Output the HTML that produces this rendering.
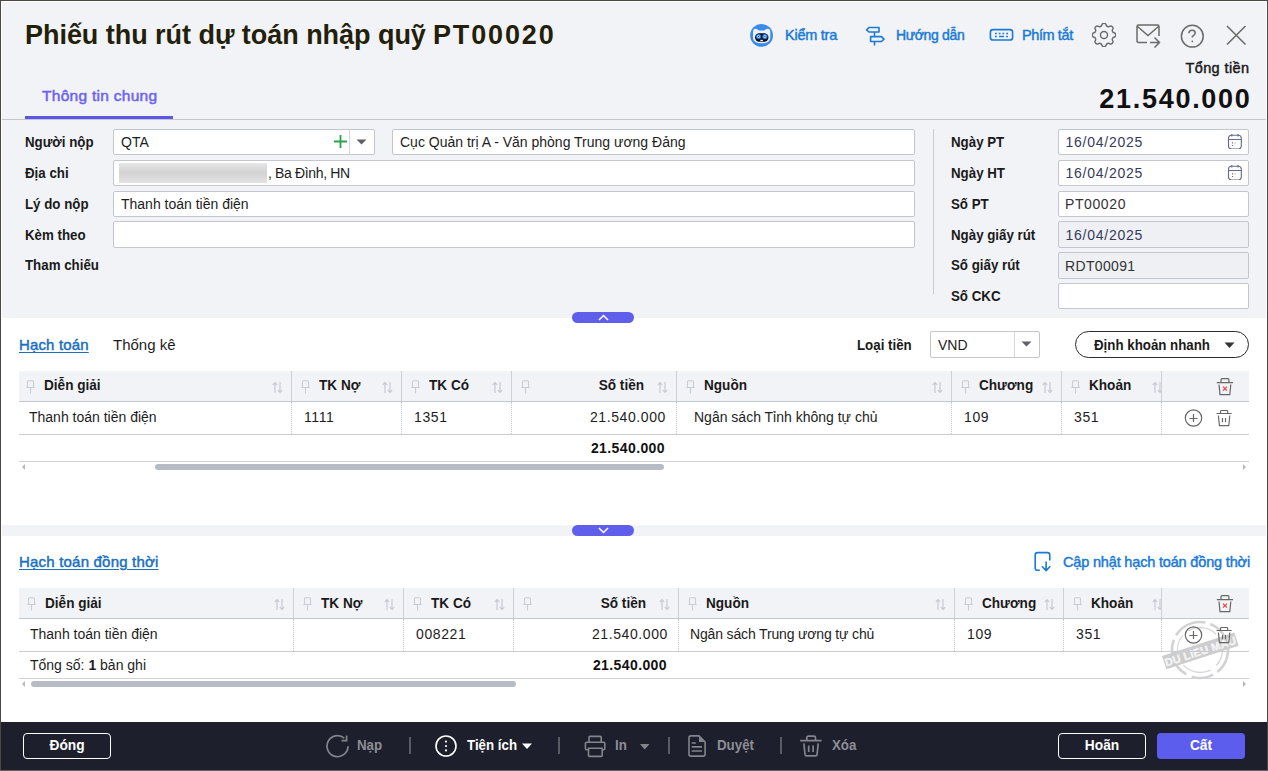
<!DOCTYPE html>
<html><head><meta charset="utf-8">
<style>
*{box-sizing:border-box;margin:0;padding:0}
html,body{width:1268px;height:771px;overflow:hidden;background:#fff}
body{position:relative;font-family:"Liberation Sans",sans-serif;color:#1d1d1d}
.a{position:absolute}
.t{position:absolute;white-space:nowrap}
</style></head><body>
<div class="a" style="left:0px;top:0px;width:1268px;height:771px;background:#fff"></div>
<div class="a" style="left:2px;top:2px;width:1264px;height:316px;background:#f2f3f7"></div>
<div class="a" style="left:2px;top:525px;width:1264px;height:11px;background:#f2f3f7"></div>
<div class="a" style="left:0px;top:0px;width:1268px;height:1px;background:#4b4745"></div>
<div class="a" style="left:0px;top:0px;width:1px;height:771px;background:#4b4745"></div>
<div class="a" style="left:1267px;top:0px;width:1px;height:771px;background:#4b4745"></div>
<div class="a" style="left:0px;top:770px;width:1268px;height:1px;background:#65605d"></div>
<div class="t" style="top:24.64px;font-size:27px;line-height:20px;color:#231f0a;font-weight:bold;letter-spacing:-0.04px;left:25px;">Phiếu thu rút dự toán nhập quỹ</div>
<div class="t" style="top:24.64px;font-size:27px;line-height:20px;color:#231f0a;font-weight:bold;letter-spacing:1.85px;left:433px;">PT00020</div>
<svg class="a" style="left:748px;top:22px" width="28" height="27" viewBox="0 0 28 27"><circle cx="13.55" cy="13.4" r="11.4" fill="#3b8beb"/>
<path d="M5 10.2Q5 6.8 7.5 6.8Q9.5 6.8 10.8 8.4H16.3Q17.6 6.8 19.6 6.8Q22.3 6.8 22.3 10.2V15.5Q22.3 21.3 13.6 21.3Q5 21.3 5 15.5Z" fill="#eaf3fd"/>
<rect x="7" y="11.2" width="13.5" height="8.6" rx="4.2" fill="#0d0d12"/>
<circle cx="10.6" cy="14.6" r="2.6" fill="#1e7cf2"/><circle cx="16.9" cy="14.6" r="2.6" fill="#1e7cf2"/>
<circle cx="10.6" cy="14.6" r="1.4" fill="#cfe3fb"/><circle cx="16.9" cy="14.6" r="1.4" fill="#cfe3fb"/>
<circle cx="10.6" cy="14.6" r="0.7" fill="#333"/><circle cx="16.9" cy="14.6" r="0.7" fill="#333"/>
<rect x="12.4" y="17.8" width="2.4" height="1.3" fill="#fff"/></svg>
<div class="t" style="top:24.98px;font-size:14.5px;line-height:20px;color:#1a7ad6;-webkit-text-stroke:0.45px #1a7ad6;letter-spacing:-0.25px;left:785px;">Kiểm tra</div>
<svg class="a" style="left:862px;top:24px" width="26" height="24" viewBox="0 0 26 24"><path d="M7 3.5H17V8H7L4.6 5.8Z M12.5 8V12.6 M8.6 12.6H19.5L22 15.1L19.5 17.5H8.6Z M12.5 17.5V21.5" fill="none" stroke="#1a7ad6" stroke-width="1.6" stroke-linejoin="round"/></svg>
<div class="t" style="top:25.15px;font-size:14px;line-height:20px;color:#1a7ad6;-webkit-text-stroke:0.45px #1a7ad6;letter-spacing:-0.35px;left:896px;">Hướng dẫn</div>
<svg class="a" style="left:986px;top:25px" width="31" height="19" viewBox="0 0 31 19"><rect x="4.4" y="4.6" width="22.2" height="10.4" rx="2.6" fill="none" stroke="#1a7ad6" stroke-width="1.6"/><path d="M9 8.5h1.8M12.7 8.5h1.8M16.4 8.5h1.8M20.2 8.5h1.8M9 11.5h1.8M13.1 11.5h4.9M20.2 11.5h1.8" stroke="#1a7ad6" stroke-width="1.5"/></svg>
<div class="t" style="top:24.98px;font-size:14.5px;line-height:20px;color:#1a7ad6;-webkit-text-stroke:0.45px #1a7ad6;letter-spacing:-0.4px;left:1022px;">Phím tắt</div>
<svg class="a" style="left:1092px;top:23px" width="24" height="24" viewBox="2.8 2.8 18.4 18.4"><path d="M10.325 4.317c.426 -1.756 2.924 -1.756 3.35 0a1.724 1.724 0 0 0 2.573 1.066c1.543 -.94 3.31 .826 2.37 2.37a1.724 1.724 0 0 0 1.065 2.572c1.756 .426 1.756 2.924 0 3.35a1.724 1.724 0 0 0 -1.066 2.573c.94 1.543 -.826 3.31 -2.37 2.37a1.724 1.724 0 0 0 -2.572 1.065c-.426 1.756 -2.924 1.756 -3.35 0a1.724 1.724 0 0 0 -2.573 -1.066c-1.543 .94 -3.31 -.826 -2.37 -2.37a1.724 1.724 0 0 0 -1.065 -2.572c-1.756 -.426 -1.756 -2.924 0 -3.35a1.724 1.724 0 0 0 1.066 -2.573c-.94 -1.543 .826 -3.31 2.37 -2.37c1 .608 2.296 .07 2.572 -1.065z M9.3 12a2.7 2.7 0 1 0 5.4 0a2.7 2.7 0 0 0 -5.4 0" fill="none" stroke="#6b6b6b" stroke-width="1.1"/></svg>
<svg class="a" style="left:1136px;top:24px" width="25" height="24" viewBox="0 0 25 24"><path d="M11 18.5H2.5Q1 18.5 1 17V2.5Q1 1 2.5 1H21.5Q23 1 23 2.5V12 M1.5 2.5L12 11.5L22.5 2.5 M14 18.5H23.5 M18.5 13.5L23.5 18.5L18.5 23.5" fill="none" stroke="#6b6b6b" stroke-width="1.5"/></svg>
<svg class="a" style="left:1180px;top:24px" width="25" height="25" viewBox="0 0 25 25"><circle cx="12.3" cy="12.2" r="10.9" fill="none" stroke="#6b6b6b" stroke-width="1.5"/><path d="M8.8 9.3Q9 6.2 12.2 6.2Q15.2 6.2 15.2 9Q15.2 11 12.3 12.5V13.5" fill="none" stroke="#6b6b6b" stroke-width="1.5"/><circle cx="12.3" cy="17.3" r="0.9" fill="#6b6b6b"/></svg>
<svg class="a" style="left:1226px;top:25px" width="21" height="21" viewBox="0 0 21 21"><path d="M1 1L19.5 19.5M19.5 1L1 19.5" stroke="#6b6b6b" stroke-width="1.6"/></svg>
<div class="t" style="top:57.98px;font-size:14.5px;line-height:20px;color:#1a1a1a;-webkit-text-stroke:0.45px #1a1a1a;letter-spacing:0.4px;left:649.5px;width:600px;text-align:right;margin-right:-0.4px;">Tổng tiền</div>
<div class="t" style="top:88.64px;font-size:27px;line-height:20px;color:#111;font-weight:bold;letter-spacing:1.7px;left:651.5px;width:600px;text-align:right;margin-right:-1.7px;">21.540.000</div>
<div class="t" style="top:85.63px;font-size:15.5px;line-height:20px;color:#6b63ee;-webkit-text-stroke:0.5px #6b63ee;letter-spacing:0.28px;left:42px;">Thông tin chung</div>
<div class="a" style="left:25px;top:116px;width:148px;height:3px;background:#5b55ea"></div>
<div class="a" style="left:2px;top:119px;width:1264px;height:1px;background:#c4c6cc"></div>
<div class="t" style="top:132.15px;font-size:14px;line-height:20px;color:#1a1a1a;font-weight:bold;transform:scaleX(0.95);transform-origin:left center;left:25px;">Người nộp</div>
<div class="t" style="top:163.15px;font-size:14px;line-height:20px;color:#1a1a1a;font-weight:bold;transform:scaleX(0.95);transform-origin:left center;left:25px;">Địa chi</div>
<div class="t" style="top:194.15px;font-size:14px;line-height:20px;color:#1a1a1a;font-weight:bold;transform:scaleX(0.95);transform-origin:left center;left:25px;">Lý do nộp</div>
<div class="t" style="top:225.15px;font-size:14px;line-height:20px;color:#1a1a1a;font-weight:bold;transform:scaleX(0.95);transform-origin:left center;left:25px;">Kèm theo</div>
<div class="t" style="top:255.15px;font-size:14px;line-height:20px;color:#1a1a1a;font-weight:bold;transform:scaleX(0.95);transform-origin:left center;left:25px;">Tham chiếu</div>
<div class="a" style="left:113px;top:129px;width:262px;height:26px;background:#fff;border:1px solid #c4c6cf;border-radius:2px"></div>
<div class="a" style="left:392px;top:129px;width:523px;height:26px;background:#fff;border:1px solid #c4c6cf;border-radius:2px"></div>
<div class="a" style="left:113px;top:160px;width:802px;height:26px;background:#fff;border:1px solid #c4c6cf;border-radius:2px"></div>
<div class="a" style="left:113px;top:191px;width:802px;height:26px;background:#fff;border:1px solid #c4c6cf;border-radius:2px"></div>
<div class="a" style="left:113px;top:221px;width:802px;height:27px;background:#fff;border:1px solid #c4c6cf;border-radius:2px"></div>
<div class="a" style="left:349px;top:130px;width:1px;height:24px;background:#d5d7dd"></div>
<svg class="a" style="left:333px;top:134px" width="15" height="15" viewBox="0 0 15 15"><path d="M7.5 1V14M1 7.5H14" stroke="#2aa44a" stroke-width="1.8"/></svg>
<svg class="a" style="left:356px;top:139px" width="11" height="6" viewBox="0 0 11 6"><path d="M0.5 0.5H10.5L5.5 5.5Z" fill="#5f6066"/></svg>
<div class="t" style="top:132.15px;font-size:14px;line-height:20px;color:#1d1d1d;left:121px;">QTA</div>
<div class="t" style="top:132.15px;font-size:14px;line-height:20px;color:#1d1d1d;left:400px;">Cục Quản trị A - Văn phòng Trung ương Đảng</div>
<div class="a" style="left:119px;top:163px;width:148px;height:20px;background:linear-gradient(180deg,#e6e6e6 0%,#d3d3d3 45%,#d6d6d6 60%,#e2e2e2 100%)"></div>
<div class="t" style="top:163.15px;font-size:14px;line-height:20px;color:#1d1d1d;letter-spacing:-0.35px;left:268px;">, Ba Đình, HN</div>
<div class="t" style="top:194.15px;font-size:14px;line-height:20px;color:#1d1d1d;left:121px;">Thanh toán tiền điện</div>
<div class="a" style="left:933px;top:129px;width:1px;height:165px;background:#c9cbd2"></div>
<div class="t" style="top:132.15px;font-size:14px;line-height:20px;color:#1a1a1a;font-weight:bold;transform:scaleX(0.95);transform-origin:left center;left:951px;">Ngày PT</div>
<div class="t" style="top:163.15px;font-size:14px;line-height:20px;color:#1a1a1a;font-weight:bold;transform:scaleX(0.95);transform-origin:left center;left:951px;">Ngày HT</div>
<div class="t" style="top:194.15px;font-size:14px;line-height:20px;color:#1a1a1a;font-weight:bold;transform:scaleX(0.95);transform-origin:left center;left:951px;">Số PT</div>
<div class="t" style="top:225.15px;font-size:14px;line-height:20px;color:#1a1a1a;font-weight:bold;transform:scaleX(0.95);transform-origin:left center;left:951px;">Ngày giấy rút</div>
<div class="t" style="top:255.15px;font-size:14px;line-height:20px;color:#1a1a1a;font-weight:bold;transform:scaleX(0.95);transform-origin:left center;left:951px;">Số giấy rút</div>
<div class="t" style="top:286.15px;font-size:14px;line-height:20px;color:#1a1a1a;font-weight:bold;transform:scaleX(0.95);transform-origin:left center;left:951px;">Số CKC</div>
<div class="a" style="left:1058px;top:129px;width:191px;height:26px;background:#fff;border:1px solid #c4c6cf;border-radius:2px"></div>
<div class="a" style="left:1058px;top:160px;width:191px;height:26px;background:#fff;border:1px solid #c4c6cf;border-radius:2px"></div>
<div class="a" style="left:1058px;top:191px;width:191px;height:26px;background:#fff;border:1px solid #c4c6cf;border-radius:2px"></div>
<div class="a" style="left:1058px;top:221px;width:191px;height:27px;background:#eef0f3;border:1px solid #c4c6cf;border-radius:2px"></div>
<div class="a" style="left:1058px;top:252px;width:191px;height:27px;background:#eef0f3;border:1px solid #c4c6cf;border-radius:2px"></div>
<div class="a" style="left:1058px;top:283px;width:191px;height:26px;background:#fff;border:1px solid #c4c6cf;border-radius:2px"></div>
<div class="t" style="top:132.15px;font-size:14px;line-height:20px;color:#363b5c;letter-spacing:0.75px;left:1065.5px;">16/04/2025</div>
<div class="t" style="top:163.15px;font-size:14px;line-height:20px;color:#363b5c;letter-spacing:0.75px;left:1065.5px;">16/04/2025</div>
<div class="t" style="top:194.15px;font-size:14px;line-height:20px;color:#333;letter-spacing:0.6px;left:1065px;">PT00020</div>
<div class="t" style="top:225.15px;font-size:14px;line-height:20px;color:#363b5c;letter-spacing:0.75px;left:1065.5px;">16/04/2025</div>
<div class="t" style="top:256.15px;font-size:14px;line-height:20px;color:#333;letter-spacing:0.35px;left:1065px;">RDT00091</div>
<svg class="a" style="left:1227px;top:133px" width="16" height="16" viewBox="0 0 16 16"><rect x="1.5" y="2.2" width="12.8" height="13.8" rx="3" fill="none" stroke="#646a91" stroke-width="1.1"/><path d="M4.8 1V3.4M11 1V3.4M1.5 6.45H14.3" stroke="#646a91" stroke-width="1.1"/><path d="M5.5 9.3V10.5M5.5 12.1V13.1" stroke="#646a91" stroke-width="1.1"/><path d="M8.1 9.3V10.5" stroke="#a9acc4" stroke-width="1.1"/></svg>
<svg class="a" style="left:1227px;top:164px" width="16" height="16" viewBox="0 0 16 16"><rect x="1.5" y="2.2" width="12.8" height="13.8" rx="3" fill="none" stroke="#646a91" stroke-width="1.1"/><path d="M4.8 1V3.4M11 1V3.4M1.5 6.45H14.3" stroke="#646a91" stroke-width="1.1"/><path d="M5.5 9.3V10.5M5.5 12.1V13.1" stroke="#646a91" stroke-width="1.1"/><path d="M8.1 9.3V10.5" stroke="#a9acc4" stroke-width="1.1"/></svg>
<div class="a" style="left:572px;top:312px;width:62px;height:11px;background:#5f5fec;border-radius:6px"></div>
<svg class="a" style="left:598px;top:314px" width="11" height="7" viewBox="0 0 11 7"><path d="M1 6L5.5 1.5L10 6" fill="none" stroke="#fff" stroke-width="1.5"/></svg>
<div class="a" style="left:572px;top:525px;width:62px;height:11px;background:#5f5fec;border-radius:6px"></div>
<svg class="a" style="left:598px;top:527px" width="11" height="7" viewBox="0 0 11 7"><path d="M1 1L5.5 5.5L10 1" fill="none" stroke="#fff" stroke-width="1.5"/></svg>
<div class="t" style="top:334.80px;font-size:15px;line-height:20px;color:#1a6fc0;-webkit-text-stroke:0.45px #1a6fc0;letter-spacing:0.15px;left:19px;text-decoration:underline;text-underline-offset:2px">Hạch toán</div>
<div class="t" style="top:334.80px;font-size:15px;line-height:20px;color:#1d1d1d;left:113px;">Thống kê</div>
<div class="t" style="top:335.15px;font-size:14px;line-height:20px;color:#1a1a1a;font-weight:bold;transform:scaleX(0.95);transform-origin:left center;left:857px;">Loại tiền</div>
<div class="a" style="left:930px;top:331px;width:110px;height:27px;background:#fff;border:1px solid #c4c6cf;border-radius:2px"></div>
<div class="a" style="left:1014px;top:332px;width:1px;height:25px;background:#d5d7dd"></div>
<svg class="a" style="left:1021px;top:341px" width="11" height="6" viewBox="0 0 11 6"><path d="M0.5 0.5H10.5L5.5 5.5Z" fill="#5f6066"/></svg>
<div class="t" style="top:335.15px;font-size:14px;line-height:20px;color:#1d1d1d;left:938px;">VND</div>
<div class="a" style="left:1075px;top:331px;width:174px;height:27px;background:#fff;border:1px solid #2b2b2b;border-radius:14px"></div>
<div class="t" style="top:335.15px;font-size:14px;line-height:20px;color:#1a1a1a;font-weight:bold;transform:scaleX(0.95);transform-origin:left center;left:1094px;">Định khoản nhanh</div>
<svg class="a" style="left:1224px;top:342px" width="11" height="7" viewBox="0 0 11 7"><path d="M0.5 0.5H10.5L5.5 6Z" fill="#333"/></svg>
<div class="t" style="top:551.80px;font-size:15px;line-height:20px;color:#1a6fc0;-webkit-text-stroke:0.45px #1a6fc0;letter-spacing:0.2px;left:19px;text-decoration:underline;text-underline-offset:2px">Hạch toán đồng thời</div>
<svg class="a" style="left:1028px;top:546px" width="30" height="30" viewBox="0 0 30 30"><path d="M11.3 24.3H9.5Q7.2 24.3 7.2 22V8.9Q7.2 6.6 9.5 6.6H19.5Q21.8 6.6 21.8 8.9V14 M18.1 16V24.8 M14.4 20.8L18.1 24.6L21.8 20.8" fill="none" stroke="#1a7ad6" stroke-width="1.6" stroke-linecap="round" stroke-linejoin="round"/></svg>
<svg class="a" style="left:1160px;top:615px" width="80" height="70" viewBox="0 0 80 70"><g transform="rotate(-18 40 35)">
<circle cx="40" cy="35" r="28" fill="none" stroke="#d2d2d2" stroke-width="2.6" stroke-dasharray="34 5 22 6 40 5"/>
<circle cx="40" cy="35" r="22.5" fill="none" stroke="#d8d8d8" stroke-width="1.3" stroke-dasharray="24 7 30 8"/>
<rect x="2" y="29" width="76" height="14" fill="#cdcdcd"/>
<text x="40" y="40.2" text-anchor="middle" font-family="Liberation Sans" font-weight="bold" font-size="11" letter-spacing="0.2" fill="#f4f4f4" stroke="#f4f4f4" stroke-width="0.4">DU LIEU MAU</text>
</g></svg>
<div class="t" style="top:551.98px;font-size:14.5px;line-height:20px;color:#1a7ad6;-webkit-text-stroke:0.45px #1a7ad6;letter-spacing:-0.17px;left:1063px;">Cập nhật hạch toán đồng thời</div>
<div class="a" style="left:19px;top:371px;width:1230px;height:30px;background:#f2f3f7"></div>
<div class="a" style="left:19px;top:401px;width:1230px;height:1px;background:#c4c7cf"></div>
<div class="a" style="left:19px;top:434px;width:1230px;height:1px;background:#c9ccd3"></div>
<div class="a" style="left:19px;top:461px;width:1230px;height:1px;background:#cfd1d7"></div>
<div class="a" style="left:291px;top:371px;width:1px;height:30px;background:#cdd0d6"></div>
<div class="a" style="left:291px;top:402px;width:1px;height:32px;border-left:1px dotted #c5c8cf"></div>
<div class="a" style="left:401px;top:371px;width:1px;height:30px;background:#cdd0d6"></div>
<div class="a" style="left:401px;top:402px;width:1px;height:32px;border-left:1px dotted #c5c8cf"></div>
<div class="a" style="left:511px;top:371px;width:1px;height:30px;background:#cdd0d6"></div>
<div class="a" style="left:511px;top:402px;width:1px;height:32px;border-left:1px dotted #c5c8cf"></div>
<div class="a" style="left:676px;top:371px;width:1px;height:30px;background:#cdd0d6"></div>
<div class="a" style="left:676px;top:402px;width:1px;height:32px;border-left:1px dotted #c5c8cf"></div>
<div class="a" style="left:951px;top:371px;width:1px;height:30px;background:#cdd0d6"></div>
<div class="a" style="left:951px;top:402px;width:1px;height:32px;border-left:1px dotted #c5c8cf"></div>
<div class="a" style="left:1061px;top:371px;width:1px;height:30px;background:#cdd0d6"></div>
<div class="a" style="left:1061px;top:402px;width:1px;height:32px;border-left:1px dotted #c5c8cf"></div>
<div class="a" style="left:1161px;top:371px;width:1px;height:30px;background:#cdd0d6"></div>
<div class="a" style="left:1161px;top:402px;width:1px;height:32px;border-left:1px dotted #c5c8cf"></div>
<svg class="a" style="left:26px;top:380px" width="9" height="14" viewBox="0 0 9 14"><path d="M1.5 7.5V1.8Q1.5 0.8 2.5 0.8H6.5Q7.5 0.8 7.5 1.8V7.5M0.3 7.5H8.7M4.5 7.5V13.5" stroke="#c9ccd2" stroke-width="1.1" fill="none"/></svg>
<div class="t" style="top:375.15px;font-size:14px;line-height:20px;color:#1a1a1a;font-weight:bold;transform:scaleX(0.97);transform-origin:left center;left:44px;">Diễn giải</div>
<svg class="a" style="left:272px;top:381px" width="11" height="13" viewBox="0 0 11 13"><path d="M3 12V1.8M0.8 3.9L3 1.5L5.2 3.9M8 1V11.2M5.8 9.1L8 11.5L10.2 9.1" stroke="#c6c9d0" stroke-width="1.15" fill="none"/></svg>
<svg class="a" style="left:301px;top:380px" width="9" height="14" viewBox="0 0 9 14"><path d="M1.5 7.5V1.8Q1.5 0.8 2.5 0.8H6.5Q7.5 0.8 7.5 1.8V7.5M0.3 7.5H8.7M4.5 7.5V13.5" stroke="#c9ccd2" stroke-width="1.1" fill="none"/></svg>
<div class="t" style="top:375.15px;font-size:14px;line-height:20px;color:#1a1a1a;font-weight:bold;transform:scaleX(0.97);transform-origin:left center;left:319px;">TK Nợ</div>
<svg class="a" style="left:382px;top:381px" width="11" height="13" viewBox="0 0 11 13"><path d="M3 12V1.8M0.8 3.9L3 1.5L5.2 3.9M8 1V11.2M5.8 9.1L8 11.5L10.2 9.1" stroke="#c6c9d0" stroke-width="1.15" fill="none"/></svg>
<svg class="a" style="left:411px;top:380px" width="9" height="14" viewBox="0 0 9 14"><path d="M1.5 7.5V1.8Q1.5 0.8 2.5 0.8H6.5Q7.5 0.8 7.5 1.8V7.5M0.3 7.5H8.7M4.5 7.5V13.5" stroke="#c9ccd2" stroke-width="1.1" fill="none"/></svg>
<div class="t" style="top:375.15px;font-size:14px;line-height:20px;color:#1a1a1a;font-weight:bold;transform:scaleX(0.97);transform-origin:left center;left:429px;">TK Có</div>
<svg class="a" style="left:492px;top:381px" width="11" height="13" viewBox="0 0 11 13"><path d="M3 12V1.8M0.8 3.9L3 1.5L5.2 3.9M8 1V11.2M5.8 9.1L8 11.5L10.2 9.1" stroke="#c6c9d0" stroke-width="1.15" fill="none"/></svg>
<svg class="a" style="left:521px;top:380px" width="9" height="14" viewBox="0 0 9 14"><path d="M1.5 7.5V1.8Q1.5 0.8 2.5 0.8H6.5Q7.5 0.8 7.5 1.8V7.5M0.3 7.5H8.7M4.5 7.5V13.5" stroke="#c9ccd2" stroke-width="1.1" fill="none"/></svg>
<div class="t" style="top:375.15px;font-size:14px;line-height:20px;color:#1a1a1a;font-weight:bold;transform:scaleX(0.97);transform-origin:right center;left:44px;width:600px;text-align:right;">Số tiền</div>
<svg class="a" style="left:657px;top:381px" width="11" height="13" viewBox="0 0 11 13"><path d="M3 12V1.8M0.8 3.9L3 1.5L5.2 3.9M8 1V11.2M5.8 9.1L8 11.5L10.2 9.1" stroke="#c6c9d0" stroke-width="1.15" fill="none"/></svg>
<svg class="a" style="left:686px;top:380px" width="9" height="14" viewBox="0 0 9 14"><path d="M1.5 7.5V1.8Q1.5 0.8 2.5 0.8H6.5Q7.5 0.8 7.5 1.8V7.5M0.3 7.5H8.7M4.5 7.5V13.5" stroke="#c9ccd2" stroke-width="1.1" fill="none"/></svg>
<div class="t" style="top:375.15px;font-size:14px;line-height:20px;color:#1a1a1a;font-weight:bold;transform:scaleX(0.97);transform-origin:left center;left:704px;">Nguồn</div>
<svg class="a" style="left:932px;top:381px" width="11" height="13" viewBox="0 0 11 13"><path d="M3 12V1.8M0.8 3.9L3 1.5L5.2 3.9M8 1V11.2M5.8 9.1L8 11.5L10.2 9.1" stroke="#c6c9d0" stroke-width="1.15" fill="none"/></svg>
<svg class="a" style="left:961px;top:380px" width="9" height="14" viewBox="0 0 9 14"><path d="M1.5 7.5V1.8Q1.5 0.8 2.5 0.8H6.5Q7.5 0.8 7.5 1.8V7.5M0.3 7.5H8.7M4.5 7.5V13.5" stroke="#c9ccd2" stroke-width="1.1" fill="none"/></svg>
<div class="t" style="top:375.15px;font-size:14px;line-height:20px;color:#1a1a1a;font-weight:bold;transform:scaleX(0.97);transform-origin:left center;left:979px;">Chương</div>
<svg class="a" style="left:1042px;top:381px" width="11" height="13" viewBox="0 0 11 13"><path d="M3 12V1.8M0.8 3.9L3 1.5L5.2 3.9M8 1V11.2M5.8 9.1L8 11.5L10.2 9.1" stroke="#c6c9d0" stroke-width="1.15" fill="none"/></svg>
<svg class="a" style="left:1071px;top:380px" width="9" height="14" viewBox="0 0 9 14"><path d="M1.5 7.5V1.8Q1.5 0.8 2.5 0.8H6.5Q7.5 0.8 7.5 1.8V7.5M0.3 7.5H8.7M4.5 7.5V13.5" stroke="#c9ccd2" stroke-width="1.1" fill="none"/></svg>
<div class="t" style="top:375.15px;font-size:14px;line-height:20px;color:#1a1a1a;font-weight:bold;transform:scaleX(0.97);transform-origin:left center;left:1089px;">Khoản</div>
<svg class="a" style="left:1152px;top:381px" width="11" height="13" viewBox="0 0 11 13"><path d="M3 12V1.8M0.8 3.9L3 1.5L5.2 3.9M8 1V11.2M5.8 9.1L8 11.5L10.2 9.1" stroke="#c6c9d0" stroke-width="1.15" fill="none"/></svg>
<div class="a" style="left:1162px;top:371px;width:87px;height:30px;background:#f2f3f7"></div>
<div class="a" style="left:1161px;top:371px;width:1px;height:30px;background:#cdd0d6"></div>
<svg class="a" style="left:1216px;top:378px" width="18" height="18" viewBox="0 0 18 18"><path d="M0.8 4.7H17 M5 4.7V1.6Q5 0.7 5.9 0.7H12Q12.9 0.7 12.9 1.6V4.7 M3 6.5L4 16.6H13.8L14.8 6.5" stroke="#676767" stroke-width="1.2" fill="none"/><path d="M7 8.7L11 12.7M11 8.7L7 12.7" stroke="#f23d3d" stroke-width="1.15"/></svg>
<div class="t" style="top:407.15px;font-size:14px;line-height:20px;color:#1d1d1d;left:29px;">Thanh toán tiền điện</div>
<div class="t" style="top:407.15px;font-size:14px;line-height:20px;color:#1d1d1d;letter-spacing:0.6px;left:304px;">1111</div>
<div class="t" style="top:407.15px;font-size:14px;line-height:20px;color:#1d1d1d;letter-spacing:0.6px;left:414px;">1351</div>
<div class="t" style="top:407.15px;font-size:14px;line-height:20px;color:#1d1d1d;letter-spacing:0.6px;left:66px;width:600px;text-align:right;margin-right:-0.6px;">21.540.000</div>
<div class="t" style="top:407.15px;font-size:14px;line-height:20px;color:#1d1d1d;left:694px;">Ngân sách Tỉnh không tự chủ</div>
<div class="t" style="top:407.15px;font-size:14px;line-height:20px;color:#1d1d1d;letter-spacing:0.6px;left:964px;">109</div>
<div class="t" style="top:407.15px;font-size:14px;line-height:20px;color:#1d1d1d;letter-spacing:0.6px;left:1074px;">351</div>
<svg class="a" style="left:1184px;top:409px" width="19" height="19" viewBox="0 0 19 19"><circle cx="9.5" cy="9" r="8.2" stroke="#676767" stroke-width="1.2" fill="none"/><path d="M5.5 9.5H13.5M9.5 5V13" stroke="#676767" stroke-width="1.2"/></svg>
<svg class="a" style="left:1216px;top:409px" width="18" height="18" viewBox="0 0 18 18"><path d="M0.5 4.5H15.7 M4.5 4.5V2.4Q4.5 1.5 5.4 1.5H10.8Q11.7 1.5 11.7 2.4V4.5 M2.4 6.5L3.4 16.6H12.8L13.8 6.5 M6.5 9V13.2 M9.5 9V13.2" stroke="#676767" stroke-width="1.15" fill="none"/></svg>
<div class="t" style="top:438.15px;font-size:14px;line-height:20px;color:#111;font-weight:bold;letter-spacing:0.4px;left:65px;width:600px;text-align:right;margin-right:-0.4px;">21.540.000</div>
<div class="a" style="left:155px;top:464px;width:509px;height:6px;background:#b7bbc3;border-radius:3px"></div>
<svg class="a" style="left:21px;top:464px" width="6" height="7" viewBox="0 0 6 7"><path d="M4 0L1 3L4 6Z" fill="#b5b9c1"/></svg>
<svg class="a" style="left:1242px;top:464px" width="6" height="7" viewBox="0 0 6 7"><path d="M1 0L4 3L1 6Z" fill="#b5b9c1"/></svg>
<div class="a" style="left:19px;top:588px;width:1230px;height:30px;background:#f2f3f7"></div>
<div class="a" style="left:19px;top:618px;width:1230px;height:1px;background:#c4c7cf"></div>
<div class="a" style="left:19px;top:651px;width:1230px;height:1px;background:#c9ccd3"></div>
<div class="a" style="left:19px;top:678px;width:1230px;height:1px;background:#cfd1d7"></div>
<div class="a" style="left:293px;top:588px;width:1px;height:30px;background:#cdd0d6"></div>
<div class="a" style="left:293px;top:619px;width:1px;height:32px;border-left:1px dotted #c5c8cf"></div>
<div class="a" style="left:403px;top:588px;width:1px;height:30px;background:#cdd0d6"></div>
<div class="a" style="left:403px;top:619px;width:1px;height:32px;border-left:1px dotted #c5c8cf"></div>
<div class="a" style="left:513px;top:588px;width:1px;height:30px;background:#cdd0d6"></div>
<div class="a" style="left:513px;top:619px;width:1px;height:32px;border-left:1px dotted #c5c8cf"></div>
<div class="a" style="left:678px;top:588px;width:1px;height:30px;background:#cdd0d6"></div>
<div class="a" style="left:678px;top:619px;width:1px;height:32px;border-left:1px dotted #c5c8cf"></div>
<div class="a" style="left:954px;top:588px;width:1px;height:30px;background:#cdd0d6"></div>
<div class="a" style="left:954px;top:619px;width:1px;height:32px;border-left:1px dotted #c5c8cf"></div>
<div class="a" style="left:1063px;top:588px;width:1px;height:30px;background:#cdd0d6"></div>
<div class="a" style="left:1063px;top:619px;width:1px;height:32px;border-left:1px dotted #c5c8cf"></div>
<div class="a" style="left:1161px;top:588px;width:1px;height:30px;background:#cdd0d6"></div>
<div class="a" style="left:1161px;top:619px;width:1px;height:32px;border-left:1px dotted #c5c8cf"></div>
<svg class="a" style="left:27px;top:597px" width="9" height="14" viewBox="0 0 9 14"><path d="M1.5 7.5V1.8Q1.5 0.8 2.5 0.8H6.5Q7.5 0.8 7.5 1.8V7.5M0.3 7.5H8.7M4.5 7.5V13.5" stroke="#c9ccd2" stroke-width="1.1" fill="none"/></svg>
<div class="t" style="top:593.15px;font-size:14px;line-height:20px;color:#1a1a1a;font-weight:bold;transform:scaleX(0.97);transform-origin:left center;left:45px;">Diễn giải</div>
<svg class="a" style="left:274px;top:598px" width="11" height="13" viewBox="0 0 11 13"><path d="M3 12V1.8M0.8 3.9L3 1.5L5.2 3.9M8 1V11.2M5.8 9.1L8 11.5L10.2 9.1" stroke="#c6c9d0" stroke-width="1.15" fill="none"/></svg>
<svg class="a" style="left:303px;top:597px" width="9" height="14" viewBox="0 0 9 14"><path d="M1.5 7.5V1.8Q1.5 0.8 2.5 0.8H6.5Q7.5 0.8 7.5 1.8V7.5M0.3 7.5H8.7M4.5 7.5V13.5" stroke="#c9ccd2" stroke-width="1.1" fill="none"/></svg>
<div class="t" style="top:593.15px;font-size:14px;line-height:20px;color:#1a1a1a;font-weight:bold;transform:scaleX(0.97);transform-origin:left center;left:321px;">TK Nợ</div>
<svg class="a" style="left:384px;top:598px" width="11" height="13" viewBox="0 0 11 13"><path d="M3 12V1.8M0.8 3.9L3 1.5L5.2 3.9M8 1V11.2M5.8 9.1L8 11.5L10.2 9.1" stroke="#c6c9d0" stroke-width="1.15" fill="none"/></svg>
<svg class="a" style="left:413px;top:597px" width="9" height="14" viewBox="0 0 9 14"><path d="M1.5 7.5V1.8Q1.5 0.8 2.5 0.8H6.5Q7.5 0.8 7.5 1.8V7.5M0.3 7.5H8.7M4.5 7.5V13.5" stroke="#c9ccd2" stroke-width="1.1" fill="none"/></svg>
<div class="t" style="top:593.15px;font-size:14px;line-height:20px;color:#1a1a1a;font-weight:bold;transform:scaleX(0.97);transform-origin:left center;left:431px;">TK Có</div>
<svg class="a" style="left:494px;top:598px" width="11" height="13" viewBox="0 0 11 13"><path d="M3 12V1.8M0.8 3.9L3 1.5L5.2 3.9M8 1V11.2M5.8 9.1L8 11.5L10.2 9.1" stroke="#c6c9d0" stroke-width="1.15" fill="none"/></svg>
<svg class="a" style="left:523px;top:597px" width="9" height="14" viewBox="0 0 9 14"><path d="M1.5 7.5V1.8Q1.5 0.8 2.5 0.8H6.5Q7.5 0.8 7.5 1.8V7.5M0.3 7.5H8.7M4.5 7.5V13.5" stroke="#c9ccd2" stroke-width="1.1" fill="none"/></svg>
<div class="t" style="top:593.15px;font-size:14px;line-height:20px;color:#1a1a1a;font-weight:bold;transform:scaleX(0.97);transform-origin:right center;left:46px;width:600px;text-align:right;">Số tiền</div>
<svg class="a" style="left:659px;top:598px" width="11" height="13" viewBox="0 0 11 13"><path d="M3 12V1.8M0.8 3.9L3 1.5L5.2 3.9M8 1V11.2M5.8 9.1L8 11.5L10.2 9.1" stroke="#c6c9d0" stroke-width="1.15" fill="none"/></svg>
<svg class="a" style="left:688px;top:597px" width="9" height="14" viewBox="0 0 9 14"><path d="M1.5 7.5V1.8Q1.5 0.8 2.5 0.8H6.5Q7.5 0.8 7.5 1.8V7.5M0.3 7.5H8.7M4.5 7.5V13.5" stroke="#c9ccd2" stroke-width="1.1" fill="none"/></svg>
<div class="t" style="top:593.15px;font-size:14px;line-height:20px;color:#1a1a1a;font-weight:bold;transform:scaleX(0.97);transform-origin:left center;left:706px;">Nguồn</div>
<svg class="a" style="left:935px;top:598px" width="11" height="13" viewBox="0 0 11 13"><path d="M3 12V1.8M0.8 3.9L3 1.5L5.2 3.9M8 1V11.2M5.8 9.1L8 11.5L10.2 9.1" stroke="#c6c9d0" stroke-width="1.15" fill="none"/></svg>
<svg class="a" style="left:964px;top:597px" width="9" height="14" viewBox="0 0 9 14"><path d="M1.5 7.5V1.8Q1.5 0.8 2.5 0.8H6.5Q7.5 0.8 7.5 1.8V7.5M0.3 7.5H8.7M4.5 7.5V13.5" stroke="#c9ccd2" stroke-width="1.1" fill="none"/></svg>
<div class="t" style="top:593.15px;font-size:14px;line-height:20px;color:#1a1a1a;font-weight:bold;transform:scaleX(0.97);transform-origin:left center;left:982px;">Chương</div>
<svg class="a" style="left:1044px;top:598px" width="11" height="13" viewBox="0 0 11 13"><path d="M3 12V1.8M0.8 3.9L3 1.5L5.2 3.9M8 1V11.2M5.8 9.1L8 11.5L10.2 9.1" stroke="#c6c9d0" stroke-width="1.15" fill="none"/></svg>
<svg class="a" style="left:1073px;top:597px" width="9" height="14" viewBox="0 0 9 14"><path d="M1.5 7.5V1.8Q1.5 0.8 2.5 0.8H6.5Q7.5 0.8 7.5 1.8V7.5M0.3 7.5H8.7M4.5 7.5V13.5" stroke="#c9ccd2" stroke-width="1.1" fill="none"/></svg>
<div class="t" style="top:593.15px;font-size:14px;line-height:20px;color:#1a1a1a;font-weight:bold;transform:scaleX(0.97);transform-origin:left center;left:1091px;">Khoản</div>
<svg class="a" style="left:1152px;top:598px" width="11" height="13" viewBox="0 0 11 13"><path d="M3 12V1.8M0.8 3.9L3 1.5L5.2 3.9M8 1V11.2M5.8 9.1L8 11.5L10.2 9.1" stroke="#c6c9d0" stroke-width="1.15" fill="none"/></svg>
<div class="a" style="left:1162px;top:588px;width:87px;height:30px;background:#f2f3f7"></div>
<div class="a" style="left:1161px;top:588px;width:1px;height:30px;background:#cdd0d6"></div>
<svg class="a" style="left:1216px;top:595px" width="18" height="18" viewBox="0 0 18 18"><path d="M0.8 4.7H17 M5 4.7V1.6Q5 0.7 5.9 0.7H12Q12.9 0.7 12.9 1.6V4.7 M3 6.5L4 16.6H13.8L14.8 6.5" stroke="#676767" stroke-width="1.2" fill="none"/><path d="M7 8.7L11 12.7M11 8.7L7 12.7" stroke="#f23d3d" stroke-width="1.15"/></svg>
<div class="t" style="top:624.15px;font-size:14px;line-height:20px;color:#1d1d1d;left:30px;">Thanh toán tiền điện</div>
<div class="t" style="top:624.15px;font-size:14px;line-height:20px;color:#1d1d1d;letter-spacing:0.6px;left:416px;">008221</div>
<div class="t" style="top:624.15px;font-size:14px;line-height:20px;color:#1d1d1d;letter-spacing:0.6px;left:68px;width:600px;text-align:right;margin-right:-0.6px;">21.540.000</div>
<div class="t" style="top:624.15px;font-size:14px;line-height:20px;color:#1d1d1d;letter-spacing:-0.15px;left:690px;">Ngân sách Trung ương tự chủ</div>
<div class="t" style="top:624.15px;font-size:14px;line-height:20px;color:#1d1d1d;letter-spacing:0.6px;left:967px;">109</div>
<div class="t" style="top:624.15px;font-size:14px;line-height:20px;color:#1d1d1d;letter-spacing:0.6px;left:1076px;">351</div>
<svg class="a" style="left:1184px;top:626px" width="19" height="19" viewBox="0 0 19 19"><circle cx="9.5" cy="9" r="8.2" stroke="#676767" stroke-width="1.2" fill="none"/><path d="M5.5 9.5H13.5M9.5 5V13" stroke="#676767" stroke-width="1.2"/></svg>
<svg class="a" style="left:1216px;top:626px" width="18" height="18" viewBox="0 0 18 18"><path d="M0.5 4.5H15.7 M4.5 4.5V2.4Q4.5 1.5 5.4 1.5H10.8Q11.7 1.5 11.7 2.4V4.5 M2.4 6.5L3.4 16.6H12.8L13.8 6.5 M6.5 9V13.2 M9.5 9V13.2" stroke="#676767" stroke-width="1.15" fill="none"/></svg>
<div class="t" style="top:655.15px;font-size:14px;line-height:20px;color:#1d1d1d;left:30px;">Tổng số: <b>1</b> bản ghi</div>
<div class="t" style="top:655.15px;font-size:14px;line-height:20px;color:#111;font-weight:bold;letter-spacing:0.4px;left:67px;width:600px;text-align:right;margin-right:-0.4px;">21.540.000</div>
<div class="a" style="left:31px;top:681px;width:485px;height:6px;background:#b7bbc3;border-radius:3px"></div>
<svg class="a" style="left:21px;top:681px" width="6" height="7" viewBox="0 0 6 7"><path d="M4 0L1 3L4 6Z" fill="#b5b9c1"/></svg>
<svg class="a" style="left:1242px;top:681px" width="6" height="7" viewBox="0 0 6 7"><path d="M1 0L4 3L1 6Z" fill="#b5b9c1"/></svg>
<div class="a" style="left:1px;top:722px;width:1266px;height:48px;background:#1e1f2d"></div>
<div class="a" style="left:23px;top:733px;width:88px;height:26px;border:1.3px solid #fff;border-radius:4px"></div>
<div class="t" style="top:735.15px;font-size:14px;line-height:20px;color:#fff;font-weight:bold;transform:scaleX(0.98);transform-origin:center center;left:-233px;width:600px;text-align:center;">Đóng</div>
<div class="a" style="left:1058px;top:733px;width:88px;height:26px;border:1.3px solid #fff;border-radius:4px"></div>
<div class="t" style="top:735.15px;font-size:14px;line-height:20px;color:#fff;font-weight:bold;transform:scaleX(0.98);transform-origin:center center;left:802px;width:600px;text-align:center;">Hoãn</div>
<div class="a" style="left:1157px;top:733px;width:88px;height:26px;background:#5d5ded;border-radius:4px"></div>
<div class="t" style="top:735.15px;font-size:14px;line-height:20px;color:#fff;font-weight:bold;transform:scaleX(0.98);transform-origin:center center;left:901px;width:600px;text-align:center;">Cất</div>
<svg class="a" style="left:323px;top:732px" width="29" height="28" viewBox="0 0 29 28"><path d="M25 14.2A10.5 10.5 0 1 1 21.25 6.16" fill="none" stroke="#83848c" stroke-width="1.7"/><path d="M23.6 3.6V8.7H18.5" fill="none" stroke="#83848c" stroke-width="1.7"/></svg>
<div class="t" style="top:735.15px;font-size:14px;line-height:20px;color:#8d8e95;font-weight:bold;transform:scaleX(0.95);transform-origin:left center;left:357px;">Nạp</div>
<div class="a" style="left:409px;top:737px;width:2px;height:17px;background:#5a5b63"></div>
<div class="a" style="left:558px;top:737px;width:2px;height:17px;background:#5a5b63"></div>
<div class="a" style="left:668px;top:737px;width:2px;height:17px;background:#5a5b63"></div>
<div class="a" style="left:780px;top:737px;width:2px;height:17px;background:#5a5b63"></div>
<svg class="a" style="left:435px;top:735px" width="22" height="22" viewBox="0 0 22 22"><circle cx="11" cy="11" r="10" fill="none" stroke="#fff" stroke-width="1.6"/><circle cx="11" cy="6.6" r="1.1" fill="#fff"/><circle cx="11" cy="11" r="1.1" fill="#fff"/><circle cx="11" cy="15.4" r="1.1" fill="#fff"/></svg>
<div class="t" style="top:735.15px;font-size:14px;line-height:20px;color:#fff;font-weight:bold;transform:scaleX(0.95);transform-origin:left center;left:467px;">Tiện ích</div>
<svg class="a" style="left:522px;top:743px" width="11" height="7" viewBox="0 0 11 7"><path d="M0 0.5H10L5 6Z" fill="#fff"/></svg>
<svg class="a" style="left:583px;top:734px" width="24" height="24" viewBox="0 0 24 24"><path d="M6 8.5V3.4Q6 2.4 7 2.4H17.2Q18.2 2.4 18.2 3.4V8.5 M5 15.8H3.6Q2.4 15.8 2.4 14.6V9.6Q2.4 8.2 3.8 8.2H20.4Q21.8 8.2 21.8 9.6V14.6Q21.8 15.8 20.6 15.8H19.2 M5.5 14.2H19.2V21.5Q19.2 22.4 18.2 22.4H6.5Q5.5 22.4 5.5 21.5Z" fill="none" stroke="#83848c" stroke-width="1.6" stroke-linejoin="round"/></svg>
<div class="t" style="top:735.15px;font-size:14px;line-height:20px;color:#8d8e95;font-weight:bold;transform:scaleX(0.95);transform-origin:left center;left:615px;">In</div>
<svg class="a" style="left:640px;top:744px" width="10" height="6" viewBox="0 0 10 6"><path d="M0 0H9.5L4.75 5.5Z" fill="#83848c"/></svg>
<svg class="a" style="left:687px;top:734px" width="20" height="24" viewBox="0 0 20 24"><path d="M12 1.9H3.8Q2 1.9 2 3.7V20.3Q2 22.1 3.8 22.1H16.3Q18.1 22.1 18.1 20.3V8Z M4.7 9H8.8 M4.7 12.9H15 M4.7 17H15" fill="none" stroke="#83848c" stroke-width="1.6" stroke-linejoin="round"/><path d="M12 1.9L18.1 8H12Z" fill="#83848c"/></svg>
<div class="t" style="top:735.15px;font-size:14px;line-height:20px;color:#8d8e95;font-weight:bold;transform:scaleX(0.95);transform-origin:left center;left:717px;">Duyệt</div>
<svg class="a" style="left:799px;top:734px" width="24" height="24" viewBox="0 0 24 24"><path d="M1.2 6.6H22.6 M7.8 6.6V3.8Q7.8 2.2 9.4 2.2H14.9Q16.5 2.2 16.5 3.8V6.6 M4.9 9.3L6 20.4Q6.2 21.9 7.7 21.9H16.4Q17.9 21.9 18.1 20.4L19.2 9.3 M9.7 11.4V18M14.1 11.4V18" fill="none" stroke="#83848c" stroke-width="1.7"/></svg>
<div class="t" style="top:735.15px;font-size:14px;line-height:20px;color:#8d8e95;font-weight:bold;transform:scaleX(0.95);transform-origin:left center;left:832px;">Xóa</div>
</body></html>
